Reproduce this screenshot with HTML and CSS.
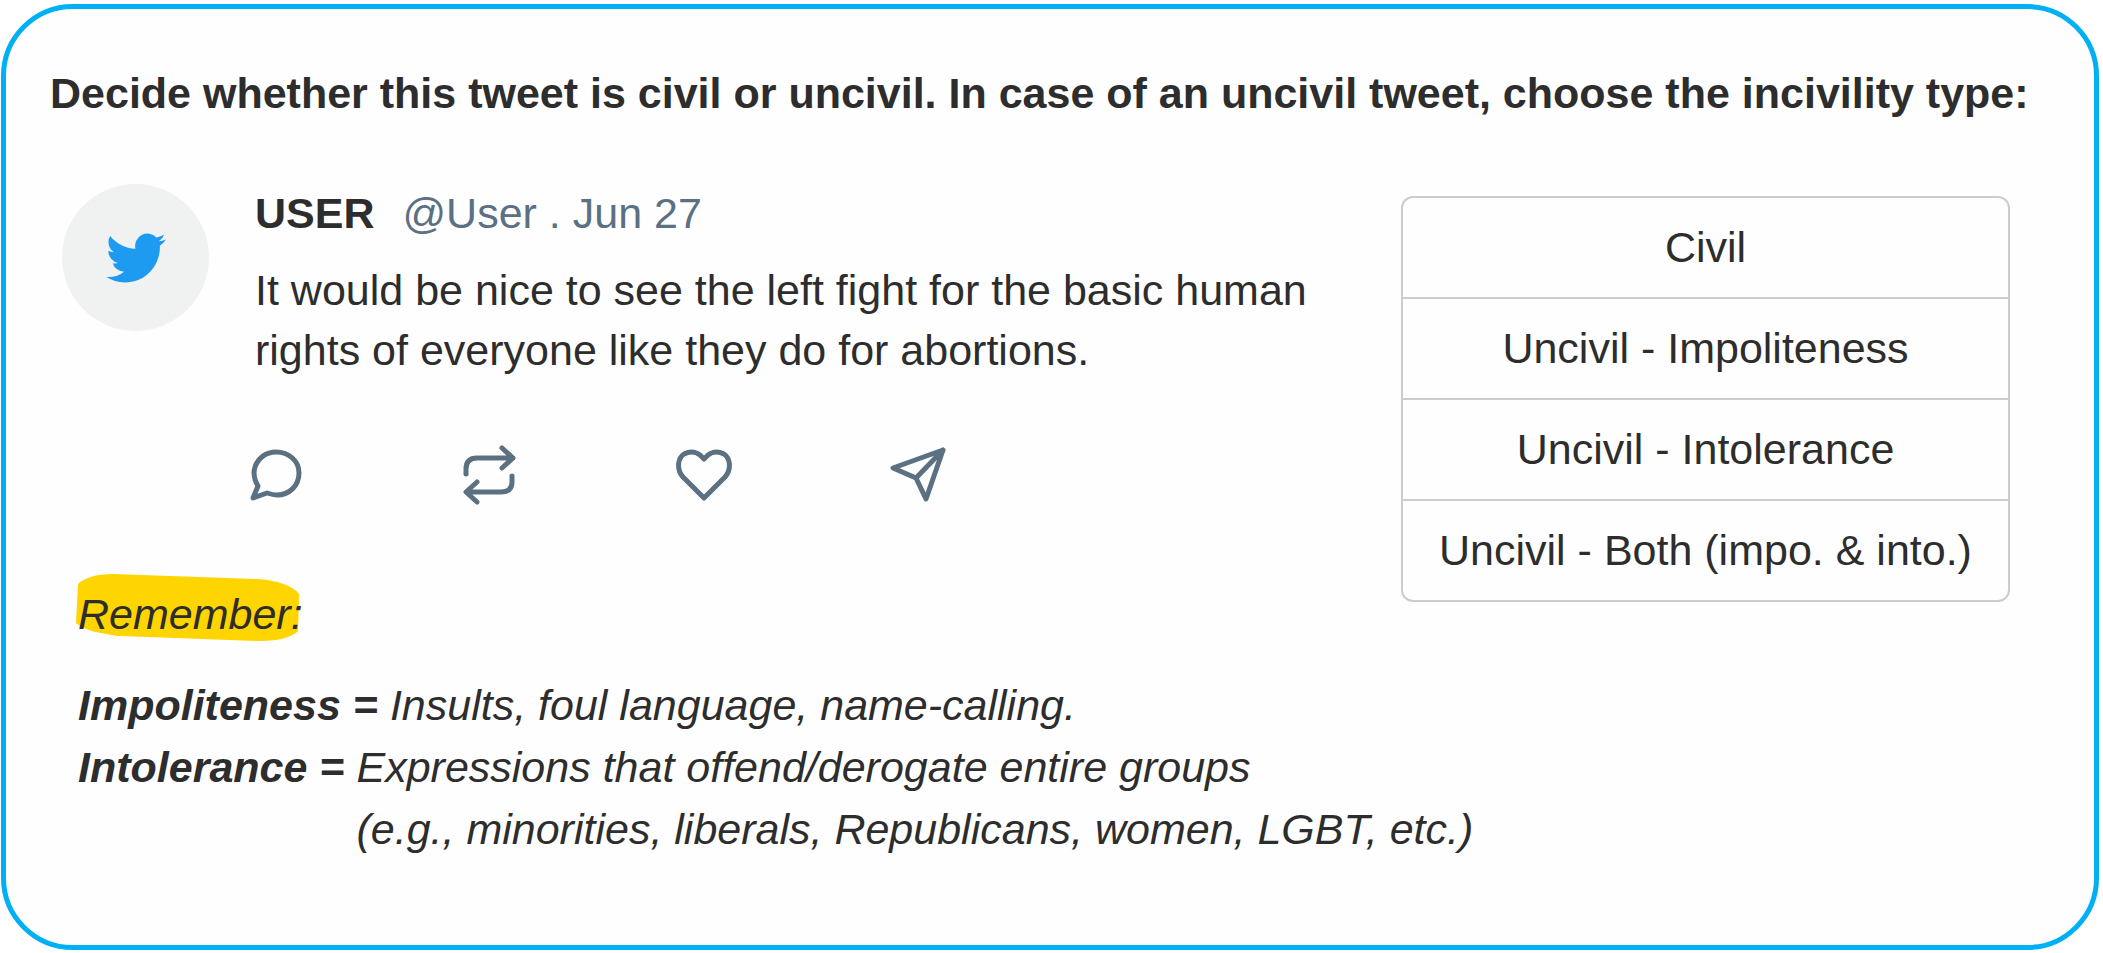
FILE: index.html
```html
<!DOCTYPE html>
<html lang="en">
<head>
  <meta charset="UTF-8" />
  <title>Tweet Civility Annotation</title>
  <meta name="viewport" content="width=device-width, initial-scale=1" />
  <link rel="stylesheet" href="styles.css">
</head>
<body>
  <main class="card">
    <h1 id="prompt">Decide whether this tweet is civil or uncivil. In case of an uncivil tweet, choose the incivility type:</h1>

    <div class="task">
      <div class="left">
        <article class="tweet">
          <div class="avatar">
            <svg viewBox="0 0 24 24" aria-hidden="true">
              <path d="M23.953 4.57a10 10 0 01-2.825.775 4.958 4.958 0 002.163-2.723c-.951.555-2.005.959-3.127 1.184a4.92 4.92 0 00-8.384 4.482C7.69 8.095 4.067 6.13 1.64 3.162a4.822 4.822 0 00-.666 2.475c0 1.71.87 3.213 2.188 4.096a4.904 4.904 0 01-2.228-.616v.06a4.923 4.923 0 003.946 4.827 4.996 4.996 0 01-2.212.085 4.936 4.936 0 004.604 3.417 9.867 9.867 0 01-6.102 2.105c-.39 0-.779-.023-1.17-.067a13.995 13.995 0 007.557 2.209c9.053 0 13.998-7.496 13.998-13.985 0-.21 0-.42-.015-.63A9.935 9.935 0 0024 4.59z" />
            </svg>
          </div>
          <div class="tweet-body">
            <div class="tweet-head">
              <strong>USER</strong>
              <span class="meta">@User . Jun 27</span>
            </div>
            <p class="tweet-text">It would be nice to see the left fight for the basic human rights of everyone like they do for abortions.</p>
            <div class="actions">
              <button type="button" aria-label="Reply">
                <svg viewBox="0 0 56 60">
                  <path d="M5 53 L10 41 C6 34 5 28 7 22 C10 13 18 7 28 7 C41 7 51 16 51 28 C51 41 41 50 29 50 C25 50 22 49 19 48 Z" />
                </svg>
              </button>
              <button type="button" aria-label="Retweet">
                <svg viewBox="0 0 56 60">
                  <path d="M4 29 V24 Q4 13 15 13 H51 M40 3 L51 13 L40 23" />
                  <path d="M50 31 V37 Q50 47 39 47 H5 M15 37 L4 47 L15 57" />
                </svg>
              </button>
              <button type="button" aria-label="Like">
                <svg viewBox="0 0 56 60">
                  <path d="M28 53 L7 32 C0 24 2 13 8 9 C14 6 20 7 24 10 L28 14 L32 10 C36 7 42 6 48 9 C54 13 56 24 49 32 Z" />
                </svg>
              </button>
              <button type="button" aria-label="Share">
                <svg viewBox="0 0 56 60">
                  <path d="M53 5 L3 23 L26 33 L36 54 Z M53 5 L26 33" />
                </svg>
              </button>
            </div>
          </div>
        </article>

        <p class="remember">
          <svg class="marker" viewBox="0 0 224 68" preserveAspectRatio="none" aria-hidden="true">
            <path d="M2 10 C8 4 20 0 37 0 L180 5 C202 6 217 12 223 20 L222 57 C216 63 204 67 183 67 L45 62 C24 60 8 56 0 49 Z" />
          </svg>
          Remember:
        </p>
      </div>

      <div class="options" role="group" aria-labelledby="prompt">
        <button type="button">Civil</button>
        <button type="button">Uncivil - Impoliteness</button>
        <button type="button">Uncivil - Intolerance</button>
        <button type="button">Uncivil - Both (impo. &amp; into.)</button>
      </div>
    </div>

    <dl class="definitions">
      <div>
        <dt>Impoliteness =</dt>
        <dd>Insults, foul language, name-calling.</dd>
      </div>
      <div>
        <dt>Intolerance =</dt>
        <dd>Expressions that offend/derogate entire groups<br>(e.g., minorities, liberals, Republicans, women, LGBT, etc.)</dd>
      </div>
    </dl>
  </main>
</body>
</html>
```
FILE: styles.css
```css
* {
  box-sizing: border-box;
}
body {
  margin: 0;
  padding: 4px 4px 3px 1px;
  min-height: 100vh;
  display: flex;
  background: #fff;
  color: #2d2d2d;
  font-family: "Liberation Sans", Arial, Helvetica, sans-serif;
  font-size: 43px;
  line-height: 60px;
}
h1, p, dl, dd {
  margin: 0;
}
button {
  background: none;
  border: none;
  padding: 0;
  color: inherit;
  font: inherit;
  cursor: pointer;
}
.card {
  flex: 1;
  padding: 54px 44px;
  background: #fefefe;
  border: 5px solid #00b0f5;
  border-radius: 72px;
}
h1 {
  font-size: 43px;
  font-weight: 700;
}
.task {
  display: flex;
  justify-content: space-between;
  align-items: flex-start;
  gap: 40px;
  margin-top: 60px;
  padding: 0 40px 0 12px;
}

/* Tweet */
.left {
  flex: 1;
  max-width: 1264px;
}
.tweet {
  display: flex;
  gap: 46px;
}
.avatar {
  flex: none;
  display: flex;
  align-items: center;
  justify-content: center;
  width: 147px;
  height: 147px;
  margin-top: 1px;
  border-radius: 50%;
  background: #f0f1f1;
}
.avatar svg {
  width: 60px;
  height: 60px;
  fill: #1d9bf0;
}
.tweet-head {
  display: flex;
  gap: 28px;
}
.meta {
  color: #5b7083;
}
.tweet-text {
  margin-top: 17px;
}
.actions {
  display: flex;
  gap: 158px;
  margin-top: 65px;
  margin-left: -7px;
}
.actions button {
  width: 56px;
  height: 60px;
}
.actions svg {
  display: block;
  width: 56px;
  height: 60px;
  fill: none;
  stroke: #5b7080;
  stroke-width: 5;
  stroke-linecap: round;
  stroke-linejoin: round;
}

/* Options */
.options {
  flex: none;
  width: 609px;
  margin-top: 13px;
  border: 2px solid #ccc;
  border-radius: 12px;
}
.options button {
  display: block;
  width: 100%;
  padding: 19px 0 20px;
}
.options button + button {
  border-top: 2px solid #ccc;
}

/* Reminder */
.remember {
  position: relative;
  z-index: 0;
  width: fit-content;
  margin-top: 79px;
  margin-left: 16px;
  font-style: italic;
}
.marker {
  position: absolute;
  z-index: -1;
  top: -10px;
  left: -2px;
  width: 224px;
  height: 68px;
  fill: #ffd500;
}
.definitions {
  margin-top: 30px;
  padding-left: 28px;
  font-style: italic;
  line-height: 62px;
}
.definitions div {
  display: flex;
  gap: 12px;
}
dt {
  font-weight: 700;
}
```
